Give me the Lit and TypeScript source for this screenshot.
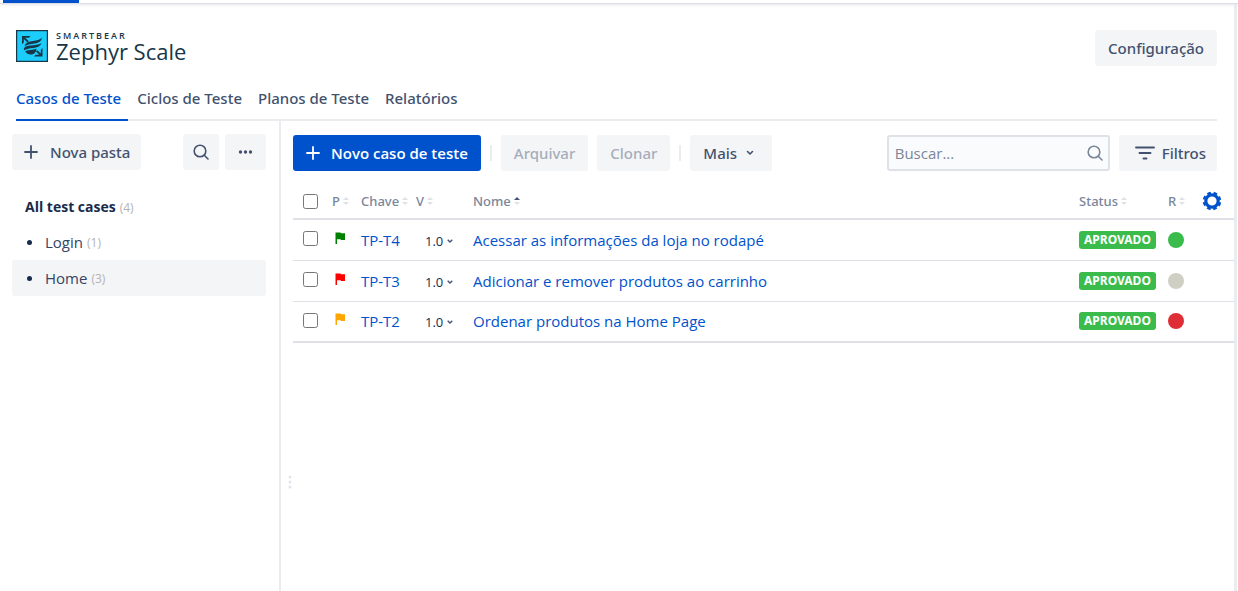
import { LitElement, html, css, svg } from "lit";
import { customElement, property, state } from "lit/decorators.js";
import { classMap } from "lit/directives/class-map.js";

interface TestCase {
  key: string;
  version: string;
  name: string;
  status: string;
  priority: "low" | "high" | "normal";
  result: "pass" | "none" | "fail";
}

const CASES: TestCase[] = [
  { key: "TP-T4", version: "1.0", name: "Acessar as informações da loja no rodapé", status: "Aprovado", priority: "low", result: "pass" },
  { key: "TP-T3", version: "1.0", name: "Adicionar e remover produtos ao carrinho", status: "Aprovado", priority: "high", result: "none" },
  { key: "TP-T2", version: "1.0", name: "Ordenar produtos na Home Page", status: "Aprovado", priority: "normal", result: "fail" },
];

const TABS = ["Casos de Teste", "Ciclos de Teste", "Planos de Teste", "Relatórios"];

const FOLDERS = [
  { name: "Login", count: 1 },
  { name: "Home", count: 3 },
];

const shared = css`
  * { box-sizing: border-box; }
  button, input { font: inherit; color: inherit; margin: 0; }
  a { color: #0052cc; text-decoration: none; }
  svg { display: block; flex: none; }
  .btn {
    display: inline-flex;
    align-items: center;
    height: 36px;
    padding: 0 13px;
    border: 0;
    border-radius: 3px;
    background: #f4f5f7;
    color: #42526e;
    font-family: "Noto Sans", sans-serif;
    font-size: 15px;
    font-weight: 500;
    line-height: 20px;
    white-space: nowrap;
    cursor: pointer;
  }
`;

const plusIcon = svg`<svg width="14" height="14" viewBox="0 0 14 14" fill="none" stroke="currentColor" stroke-width="1.8" stroke-linecap="round"><path d="M7 1v12M1 7h12"/></svg>`;
const searchIcon = svg`<svg width="16" height="16" viewBox="0 0 16 16" fill="none" stroke="currentColor" stroke-width="1.6" stroke-linecap="round"><circle cx="7" cy="7" r="5.8"/><path d="M11.3 11.3 15 15"/></svg>`;
const chevron = svg`<svg width="8" height="6" viewBox="0 0 8 6" fill="none" stroke="currentColor" stroke-width="1.6" stroke-linecap="round" stroke-linejoin="round"><path d="M1.5 1.5 4 4l2.5-2.5"/></svg>`;
const smallChevron = svg`<svg width="6" height="4" viewBox="0 0 6 4" fill="none" stroke="#42526e" stroke-width="1.3"><path d="M.7.7 3 3 5.300.7"/></svg>`;

@customElement("app-header")
export class AppHeader extends LitElement {
  @state() private tab = TABS[0];

  static styles = [shared, css`
    :host { display: block; padding: 27px 17px 0 16px; }
    .top { display: flex; justify-content: space-between; align-items: flex-start; }
    .brand { display: flex; gap: 8px; color: #173647; }
    .words { display: flex; flex-direction: column; }
    .small { font: 600 9px/12px "Open Sans", "Noto Sans", sans-serif; letter-spacing: 2px; }
    .big { font: 400 22px/18px "Open Sans", "Noto Sans", sans-serif; }
    .tabs { display: flex; gap: 9px; margin-top: 19px; border-bottom: 2px solid #ebecf0; }
    .tab {
      padding: 3px 7px 11px 0;
      margin-bottom: -2px;
      border: 0;
      border-bottom: 2px solid transparent;
      background: none;
      color: #42526e;
      font-family: "Noto Sans", sans-serif;
      font-size: 15px;
      font-weight: 500;
      line-height: 20px;
      cursor: pointer;
    }
    .tab.on { color: #0052cc; border-color: #0052cc; }
  `];

  render() {
    return html`
      <div class="top">
        <div class="brand">
          <svg width="32" height="32" viewBox="0 0 32 32">
            <rect x=".6" y=".6" width="30.8" height="30.8" fill="#1ccdfc" stroke="#173647" stroke-width="1.2"/>
            <g fill="#173647">
              <path d="M6 6h8.500L13 7.700H9.200l3.600 3.600-1.300 1.200-3.700-3.600v3.600L6 14.300z"/>
              <path d="M26.500 26.500H18l1.500-1.700h3.800L20 21.500l1.300-1.300 3.500 3.400v-3.800l1.700-1.700z"/>
              <path d="M26 7.800c-.8 3.800-3 5-7.500 5.700-4.500.6-7.500 1-10 2.700 1.200-3.700 4-4.900 8.500-5.300 4-.4 6.500-.9 9-3.100z"/>
              <path d="M25.500 13.200c-1.500 3.300-4.200 4.200-8.200 4.700-3.800.5-6.800.9-9.300 2.300-.6-3.200 2-4.400 6.500-4.800 4.500-.3 7.800-.6 11-2.200z"/>
              <path d="M20.500 18.700c-.3 3.600-2.700 5.800-5.800 5.800-2.500 0-4.700-1.300-5.500-3.300 3.300-1.800 7.500-.9 11.300-2.500z"/>
            </g>
          </svg>
          <div class="words"><span class="small">SMARTBEAR</span><span class="big">Zephyr Scale</span></div>
        </div>
        <button class="btn">Configuração</button>
      </div>
      <nav class="tabs">
        ${TABS.map((t) => html`<button class=${classMap({ tab: true, on: t === this.tab })} @click=${() => (this.tab = t)}>${t}</button>`)}
      </nav>`;
  }
}

@customElement("folder-tree")
export class FolderTree extends LitElement {
  @state() private selected = "Home";

  static styles = [shared, css`
    :host { display: block; padding: 13px 13px 0 12px; border-right: 2px solid #ebecf0; }
    .bar { display: flex; gap: 6px; }
    .new { gap: 12px; margin-right: auto; padding: 0 11px 0 12px; }
    .find { padding: 0 10px; }
    .all { display: block; margin: 21px 0 0; padding: 0 13px; font-size: 14px; font-weight: 700; line-height: 32px; color: #172b4d; }
    .list { list-style: none; margin: 0; padding: 0; }
    .folder {
      display: flex;
      align-items: center;
      width: 100%;
      height: 36px;
      padding: 0 15px;
      border: 0;
      border-radius: 3px;
      background: none;
      color: #344563;
      font-size: 15px;
      text-align: left;
      cursor: pointer;
    }
    .folder.on { background: #f4f5f7; }
    .dot { width: 5px; height: 5px; margin-right: 13px; border-radius: 50%; background: #172b4d; }
    .count { margin-left: 4px; font-size: 12px; font-weight: 400; color: #b3b3b3; }
  `];

  render() {
    return html`
      <div class="bar">
        <button class="btn new">${plusIcon}Nova pasta</button>
        <button class="btn find" aria-label="Buscar pasta">${searchIcon}</button>
        <button class="btn" aria-label="Mais opções">
          <svg width="15" height="4" viewBox="0 0 15 4" fill="currentColor"><circle cx="2.500" cy="2" r="1.700"/><circle cx="7.500" cy="2" r="1.700"/><circle cx="12.500" cy="2" r="1.700"/></svg>
        </button>
      </div>
      <a class="all" href="#all">All test cases<span class="count">(4)</span></a>
      <ul class="list">
        ${FOLDERS.map((f) => html`<li><button class=${classMap({ folder: true, on: f.name === this.selected })} @click=${() => (this.selected = f.name)}>
          <span class="dot"></span>${f.name}<span class="count">(${f.count})</span></button></li>`)}
      </ul>`;
  }
}

@customElement("case-table")
export class CaseTable extends LitElement {
  @property({ attribute: false }) cases: TestCase[] = [];

  static styles = [shared, css`
    :host { display: block; }
    .grid { width: 100%; border-collapse: collapse; table-layout: fixed; }
    .grid th { height: 35px; padding: 0; border-bottom: 2px solid #dfe1e6; text-align: left; font-family: "Noto Sans", sans-serif; font-size: 13px; font-weight: 500; color: #7a869a; }
    .grid td { height: 41px; padding: 0; border-bottom: 1px solid #dfe1e6; }
    .grid tr:last-child td { border-bottom-width: 2px; }
    .c-check { width: 39px; }
    .c-prio { width: 29px; }
    .c-key { width: 55px; }
    .c-ver { width: 57px; }
    .c-status { width: 89px; }
    .c-result { width: 34px; }
    .c-gear { width: 32px; }
    .sort { display: flex; align-items: center; gap: 3px; padding: 0; border: 0; background: none; line-height: 20px; cursor: pointer; }
    .check { display: block; width: 15px; height: 15px; margin-left: 10px; }
    td .check { margin-bottom: 2px; }
    .gear { display: block; padding: 0; border: 0; background: none; color: #0052cc; cursor: pointer; }
    .flag { margin: 0 0 4px 3px; }
    .flag.low { color: #008000; }
    .flag.high { color: #ff0000; }
    .flag.normal { color: #ffa500; }
    .link { font-size: 15px; line-height: 20px; white-space: nowrap; }
    .version { display: flex; align-items: center; gap: 4px; padding: 2px 0 0 9px; border: 0; background: none; color: #172b4d; font-size: 13px; line-height: 20px; cursor: pointer; }
    .lozenge { display: block; width: max-content; padding: 0 5px; border-radius: 3px; background: #3abb4b; color: #fff; font-family: "Noto Sans", sans-serif; font-size: 12px; font-weight: 700; line-height: 18px; text-transform: uppercase; }
    .result { display: block; width: 16px; height: 16px; border-radius: 50%; }
    .result.pass { background: #3abb4b; }
    .result.none { background: #cfcfc4; }
    .result.fail { background: #df2f36; }
  `];

  private sorter(label: string, active = false) {
    return html`<button class="sort">${label}<svg width="6" height="8" viewBox="0 0 6 8"><path d="M0 3 3 0l3 3z" fill=${active ? "#42526e" : "#dfe1e6"}/><path d="M0 5h6L3 8z" fill="#dfe1e6"/></svg></button>`;
  }

  render() {
    return html`
      <table class="grid">
        <thead>
          <tr>
            <th class="c-check"><input class="check" type="checkbox" aria-label="Selecionar todos" /></th>
            <th class="c-prio">${this.sorter("P")}</th>
            <th class="c-key">${this.sorter("Chave")}</th>
            <th class="c-ver">${this.sorter("V")}</th>
            <th>${this.sorter("Nome", true)}</th>
            <th class="c-status">${this.sorter("Status")}</th>
            <th class="c-result">${this.sorter("R")}</th>
            <th class="c-gear">
              <button class="gear" aria-label="Configurar colunas">
                <svg width="20" height="20" viewBox="0 0 20 20" fill="none" stroke="currentColor"><circle cx="10" cy="10" r="6.200" stroke-width="3.200"/><circle cx="10" cy="10" r="8" stroke-width="2.600" stroke-dasharray="3.600 2.683" stroke-dashoffset="-1.340"/></svg>
              </button>
            </th>
          </tr>
        </thead>
        <tbody>
          ${this.cases.map((c) => html`<tr>
            <td><input class="check" type="checkbox" aria-label="Selecionar ${c.key}" /></td>
            <td><svg class="flag ${c.priority}" width="11" height="12" viewBox="0 0 11 12" fill="currentColor"><path d="M.5.5H5.500l.5.700h4V8H6l-.5-.8H2V12H.5z"/></svg></td>
            <td><a class="link" href="#${c.key}">${c.key}</a></td>
            <td><button class="version">${c.version}${smallChevron}</button></td>
            <td><a class="link" href="#${c.key}">${c.name}</a></td>
            <td><span class="lozenge">${c.status}</span></td>
            <td><span class="result ${c.result}"></span></td>
            <td></td>
          </tr>`)}
        </tbody>
      </table>`;
  }
}

@customElement("app-root")
export class AppRoot extends LitElement {
  static styles = [shared, css`
    :host {
      display: flex;
      flex-direction: column;
      min-height: 100vh;
      background: #fff;
      color: #172b4d;
      font-family: "Open Sans", "Noto Sans", sans-serif;
      font-size: 15px;
    }
    .strip { position: relative; height: 3px; padding-left: 3px; box-shadow: 0 1px 0 #dcdde5, 0 2px 3px #e4e5ec; }
    .current { width: 76px; height: 3px; background: #0052cc; }
    .page { flex: 1; display: flex; flex-direction: column; margin-right: 1px; border-right: 3px solid #ebecf0; }
    .body { flex: 1; display: grid; grid-template-columns: 281px minmax(0, 1fr); }
    .main { display: grid; grid-template-columns: 12px minmax(0, 1fr); }
    .grip { display: flex; flex-direction: column; justify-content: center; align-items: flex-end; padding: 252px 1px 0 0; }
    .content { padding-top: 14px; }
    .tools { display: flex; align-items: center; padding-right: 17px; margin-bottom: 13px; }
    .primary { gap: 11px; background: #0052cc; color: #fff; font-family: "Open Sans", sans-serif; font-weight: 600; }
    .off { color: #a5adba; cursor: default; }
    .sep { width: 2px; height: 16px; margin: 0 9px; background: #ebecf0; }
    .clone { margin-left: 9px; }
    .menu { gap: 9px; padding-right: 18px; }
    .search { display: flex; align-items: center; width: 223px; height: 36px; margin: 0 9px 0 auto; padding: 0 5px 0 6px; border: 2px solid #dfe1e6; border-radius: 3px; background: #fafbfc; color: #7a869a; }
    .field { flex: 1; min-width: 0; padding: 0; border: 0; outline: 0; background: none; }
    .field::placeholder { color: #7a869a; opacity: 1; }
    .filter { gap: 7px; padding: 0 11px 0 16px; }
  `];

  render() {
    return html`
      <div class="strip"><div class="current"></div></div>
      <div class="page">
        <app-header></app-header>
        <div class="body">
          <folder-tree></folder-tree>
          <div class="main">
            <div class="grip">
              <svg width="4" height="14" viewBox="0 0 4 14" fill="#e3e4e9"><circle cx="2" cy="2" r="1.500"/><circle cx="2" cy="7" r="1.500"/><circle cx="2" cy="12" r="1.500"/></svg>
            </div>
            <main class="content">
              <div class="tools">
                <button class="btn primary">${plusIcon}Novo caso de teste</button>
                <span class="sep"></span>
                <button class="btn off" disabled>Arquivar</button>
                <button class="btn off clone" disabled>Clonar</button>
                <span class="sep"></span>
                <button class="btn menu">Mais ${chevron}</button>
                <label class="search"><input class="field" type="text" placeholder="Buscar..." aria-label="Buscar" />${searchIcon}</label>
                <button class="btn filter">
                  <svg width="20" height="16" viewBox="0 0 20 16" fill="none" stroke="currentColor" stroke-width="1.900" stroke-linecap="round"><path d="M1 2.500h18M4.500 8h11M8.500 13.500h3"/></svg>
                  Filtros
                </button>
              </div>
              <case-table .cases=${CASES}></case-table>
            </main>
          </div>
        </div>
      </div>`;
  }
}
